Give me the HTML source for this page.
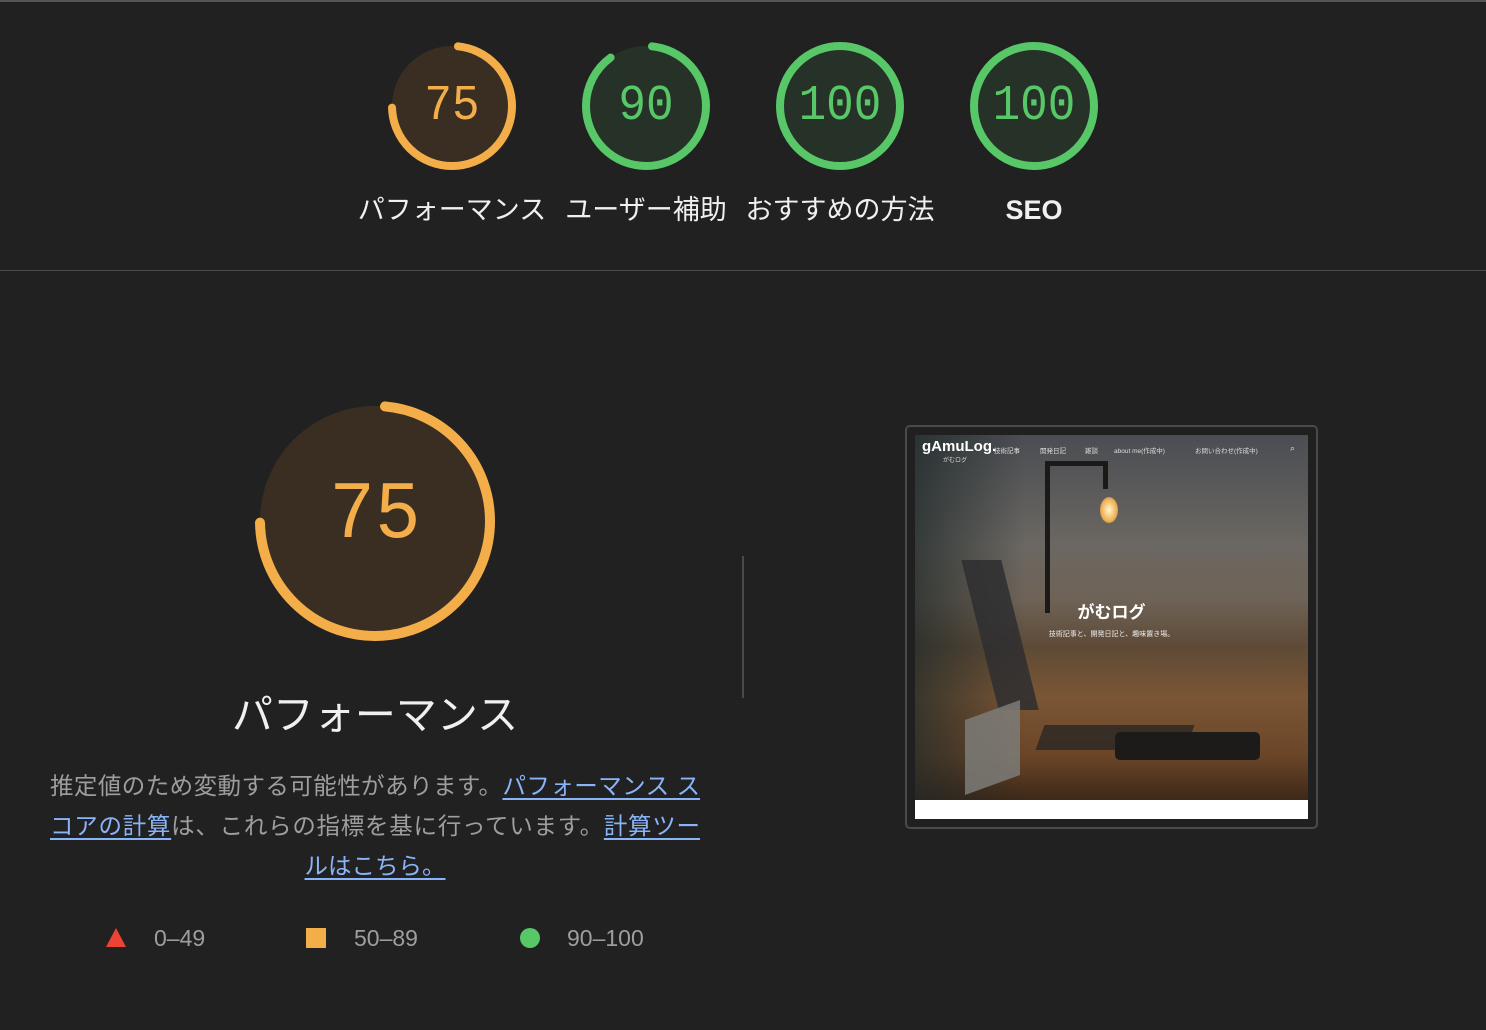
<!DOCTYPE html>
<html><head><meta charset="utf-8"><style>
*{margin:0;padding:0;box-sizing:border-box}
body{width:1486px;height:1030px;background:#212121;position:relative;overflow:hidden;font-family:"Liberation Sans","Noto Sans CJK JP",sans-serif}
.abs{position:absolute}
.g{position:absolute;width:140px;height:140px}
.num{position:absolute;left:0;width:140px;top:0;height:140px;line-height:140px;text-align:center;font-family:"Liberation Mono","DejaVu Sans Mono",monospace;font-size:46px;transform:scaleY(1.08)}
.lab{position:absolute;top:190px;width:220px;text-align:center;color:#f0f0f0;font-size:27px;line-height:40px}
.p{position:absolute;left:50px;width:650px;font-size:23.5px;color:#9e9e9e;line-height:40px}
.j{text-align:justify;text-align-last:justify;white-space:nowrap}
a{color:#8ab4f8;text-decoration:underline;text-underline-offset:4px}
.leg{position:absolute;top:922px;font-size:23px;color:#9e9e9e;line-height:32px}
.nav{position:absolute;top:10px;color:#ddd;font-size:6.5px;white-space:nowrap}
</style></head><body>
<div class="abs" style="left:0;top:0;width:1486px;height:2px;background:#555"></div>
<div class="abs" style="left:0;top:270px;width:1486px;height:1px;background:#4a4a4a"></div>

<svg class="g" style="left:382px;top:36px" viewBox="0 0 140 140"><circle cx="70" cy="70" r="60" fill="#3a2e22"/><circle cx="70" cy="70" r="60" fill="none" stroke="#f4ae49" stroke-width="8" stroke-linecap="round" stroke-dasharray="275 400" stroke-dashoffset="-6" transform="rotate(-90 70 70)"/></svg>
<div class="num" style="left:382px;top:36px;color:#f4ae49">75</div>
<svg class="g" style="left:576px;top:36px" viewBox="0 0 140 140"><circle cx="70" cy="70" r="60" fill="#263228"/><circle cx="70" cy="70" r="60" fill="none" stroke="#57c768" stroke-width="8" stroke-linecap="round" stroke-dasharray="333 400" stroke-dashoffset="-6" transform="rotate(-90 70 70)"/></svg>
<div class="num" style="left:576px;top:36px;color:#57c768">90</div>
<svg class="g" style="left:770px;top:36px" viewBox="0 0 140 140"><circle cx="70" cy="70" r="60" fill="#263228" stroke="#57c768" stroke-width="8"/></svg>
<div class="num" style="left:770px;top:36px;color:#57c768">100</div>
<svg class="g" style="left:964px;top:36px" viewBox="0 0 140 140"><circle cx="70" cy="70" r="60" fill="#263228" stroke="#57c768" stroke-width="8"/></svg>
<div class="num" style="left:964px;top:36px;color:#57c768">100</div>

<div class="lab" style="left:342px">パフォーマンス</div>
<div class="lab" style="left:536px">ユーザー補助</div>
<div class="lab" style="left:730px">おすすめの方法</div>
<div class="lab" style="left:924px;font-weight:bold">SEO</div>

<svg class="abs" style="left:245px;top:391px" width="260" height="260" viewBox="0 0 260 260"><circle cx="130" cy="130" r="115" fill="#3a2e22"/><circle cx="130" cy="130" r="115" fill="none" stroke="#f4ae49" stroke-width="10" stroke-linecap="round" stroke-dasharray="530 800" stroke-dashoffset="-10" transform="rotate(-90 130 130)"/></svg>
<div class="abs" style="left:245px;top:391px;width:260px;height:260px;line-height:250px;text-align:center;font-family:'Liberation Mono','DejaVu Sans Mono',monospace;font-size:76px;color:#f4ae49;transform:scaleY(1.08)">75</div>
<div class="abs" style="left:175px;top:690px;width:400px;text-align:center;font-size:41px;color:#f0f0f0;line-height:50px">パフォーマンス</div>

<div class="p j" style="top:766px">推定値のため変動する可能性があります。<a>パフォーマンス ス</a></div>
<div class="p j" style="top:806px"><a>コアの計算</a>は、これらの指標を基に行っています。<a>計算ツー</a></div>
<div class="p" style="top:846px;text-align:center"><a>ルはこちら。</a></div>

<svg class="abs" style="left:105px;top:927px" width="22" height="22"><polygon points="11,1 21,20 1,20" fill="#eb4436"/></svg>
<div class="leg" style="left:154px">0–49</div>
<div class="abs" style="left:306px;top:928px;width:20px;height:20px;background:#f4ae49"></div>
<div class="leg" style="left:354px">50–89</div>
<div class="abs" style="left:520px;top:928px;width:20px;height:20px;border-radius:50%;background:#57c768"></div>
<div class="leg" style="left:567px">90–100</div>

<div class="abs" style="left:742px;top:556px;width:2px;height:142px;background:#4a4a4a"></div>

<div class="abs" style="left:905px;top:425px;width:413px;height:404px;border:2px solid #4a4a4a;border-radius:5px;background:#202020"></div>
<div class="abs" style="left:915px;top:435px;width:393px;height:365px;overflow:hidden;background:linear-gradient(180deg,#4a4d52 0%,#6b6762 30%,#6e6357 45%,#5e4a37 58%,#7a5634 72%,#6a4528 88%,#3e2818 100%)">
 <div class="abs" style="left:0;top:0;width:110px;height:365px;background:linear-gradient(90deg,rgba(30,40,40,.7),rgba(0,0,0,0))"></div>
 <div class="abs" style="left:130px;top:28px;width:5px;height:150px;background:#1c1a18"></div>
 <div class="abs" style="left:130px;top:26px;width:62px;height:5px;background:#1c1a18"></div>
 <div class="abs" style="left:188px;top:26px;width:5px;height:28px;background:#1c1a18"></div>
 <div class="abs" style="left:185px;top:62px;width:18px;height:26px;border-radius:50%;background:radial-gradient(#fff6d0,#f0b050 60%,rgba(200,120,40,0) 100%)"></div>
 <div class="abs" style="left:65px;top:125px;width:40px;height:150px;background:#2e2e30;transform:skewX(14deg);opacity:.85"></div>
 <div class="abs" style="left:125px;top:290px;width:150px;height:25px;background:#2a2724;transform:skewX(-20deg);opacity:.8"></div>
 <div class="abs" style="left:200px;top:297px;width:145px;height:28px;border-radius:5px;background:#1c1b1a"></div>
 <div class="abs" style="left:50px;top:275px;width:55px;height:75px;background:#7d7c78;transform:skewY(-20deg);opacity:.85"></div>
 <div class="abs" style="left:7px;top:3px;color:#fff;font-size:15px;font-weight:bold">gAmuLog.</div>
 <div class="abs" style="left:28px;top:20px;color:#ddd;font-size:6px">がむログ</div>
 <div class="nav" style="left:79px">技術記事</div>
 <div class="nav" style="left:125px">開発日記</div>
 <div class="nav" style="left:170px">雑談</div>
 <div class="nav" style="left:199px">about me(作成中)</div>
 <div class="nav" style="left:280px">お問い合わせ(作成中)</div>
 <div class="nav" style="left:375px;font-size:9px;top:8px">⌕</div>
 <div class="abs" style="left:0;top:163px;width:393px;text-align:center;color:#fff;font-size:17px;font-weight:bold">がむログ</div>
 <div class="abs" style="left:0;top:194px;width:393px;text-align:center;color:#eee;font-size:7px">技術記事と、開発日記と、趣味置き場。</div>
</div>
<div class="abs" style="left:915px;top:800px;width:393px;height:19px;background:#fff"></div>
</body></html>
